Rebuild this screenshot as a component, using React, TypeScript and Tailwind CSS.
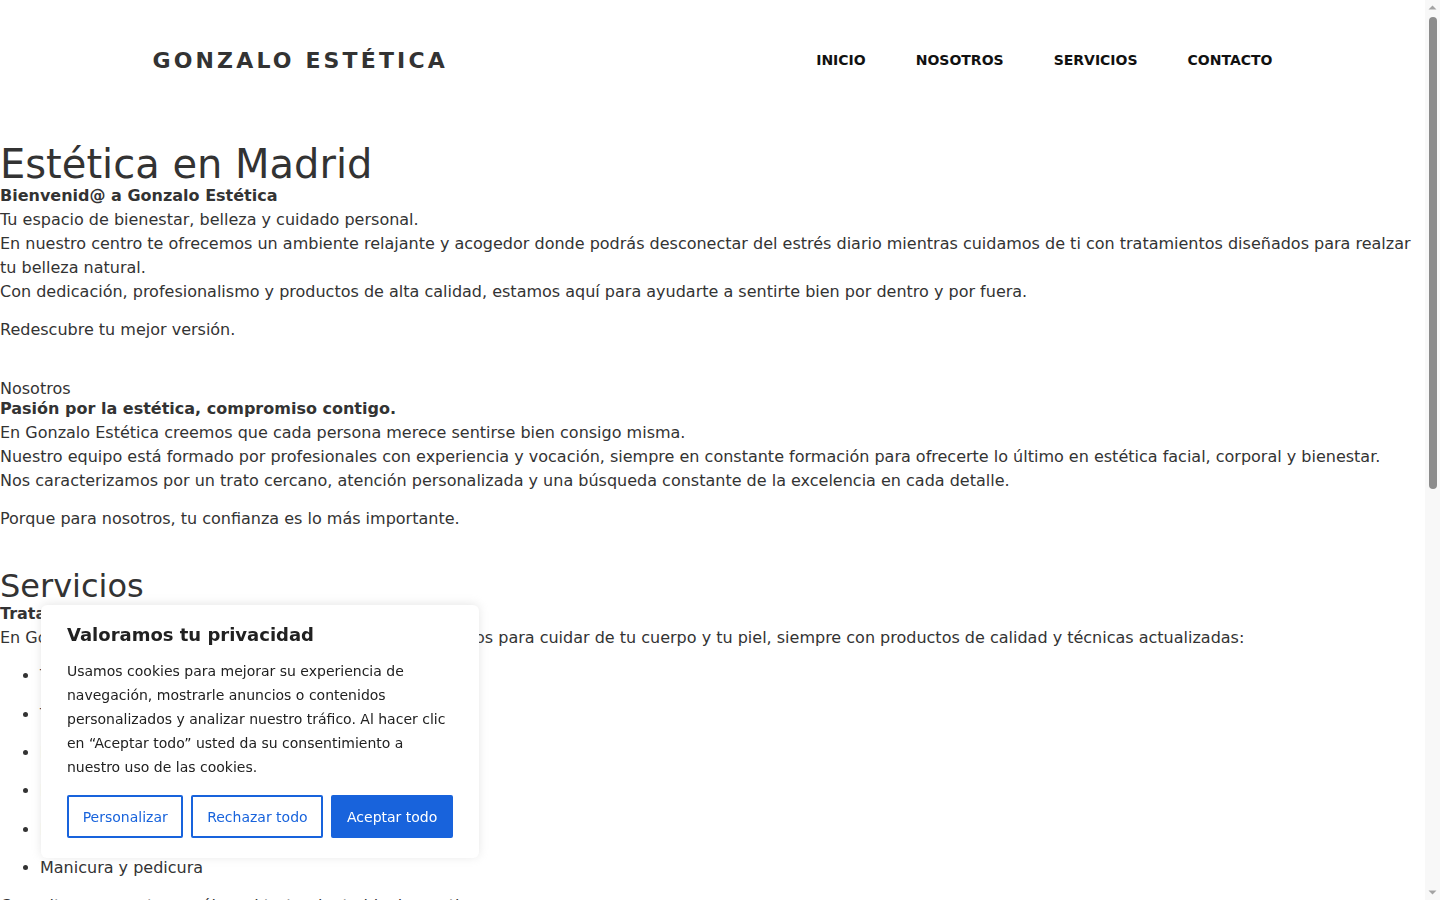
import React from "react";

const navItems = ["INICIO", "NOSOTROS", "SERVICIOS", "CONTACTO"];

const services = [
  "Tratamientos faciales",
  "Tratamientos corporales",
  "Depilación",
  "Masajes relajantes",
  "Micropigmentación",
  "Manicura y pedicura",
];

function Header() {
  return (
    <header className="h-[120px] flex items-center">
      <div className="w-full max-w-[1120px] mx-auto flex items-center justify-between">
        <a href="#" className="text-[22px] font-bold tracking-[3.15px] text-[#333] leading-none pt-px">
          GONZALO ESTÉTICA
        </a>
        <nav className="flex items-center gap-[50px]">
          {navItems.map((item) => (
            <a key={item} href="#" className="text-[14px] font-bold text-[#111] leading-none">
              {item}
            </a>
          ))}
        </nav>
      </div>
    </header>
  );
}

function CookieBanner() {
  return (
    <div className="fixed left-[41px] bottom-[42px] w-[438px] bg-white rounded-[6px] shadow-[0_-1px_10px_0_rgba(172,171,171,0.3)] pt-[18px] pb-[20px] px-[26px] z-50">
      <p className="text-[18px] font-bold leading-6 text-[#212121]">Valoramos tu privacidad</p>
      <p className="mt-3 text-[14px] leading-6 text-[#212121]">
        Usamos cookies para mejorar su experiencia de navegación, mostrarle anuncios o contenidos
        personalizados y analizar nuestro tráfico. Al hacer clic en “Aceptar todo” usted da su
        consentimiento a nuestro uso de las cookies.
      </p>
      <div className="mt-4 flex gap-2">
        <button className="flex-auto border-2 border-[#1863dc] rounded-[2px] py-[7.5px] text-[14px] leading-6 text-[#1863dc] bg-transparent">
          Personalizar
        </button>
        <button className="flex-auto border-2 border-[#1863dc] rounded-[2px] py-[7.5px] text-[14px] leading-6 text-[#1863dc] bg-transparent">
          Rechazar todo
        </button>
        <button className="flex-auto border-2 border-[#1863dc] rounded-[2px] py-[7.5px] text-[14px] leading-6 text-white bg-[#1863dc]">
          Aceptar todo
        </button>
      </div>
    </div>
  );
}

function ScrollTrack() {
  return (
    <div className="w-[15px] h-full bg-[#f8f8f8] flex flex-col items-center shrink-0">
      <svg width="15" height="15" viewBox="0 0 15 15" className="shrink-0">
        <path d="M3.5 9.5 L7.5 5.5 L11.5 9.5 Z" fill="#a3a3a3" />
      </svg>
      <div className="w-[8px] h-[472px] mt-[2px] rounded-full bg-[#8c8c8c]" />
      <div className="flex-1" />
      <svg width="15" height="15" viewBox="0 0 15 15" className="shrink-0">
        <path d="M3.5 5.5 L7.5 9.5 L11.5 5.5 Z" fill="#a3a3a3" />
      </svg>
    </div>
  );
}

export default function App() {
  return (
    <div className="font-['DejaVu_Sans',sans-serif] text-[#333] bg-white h-screen flex overflow-hidden">
      <div className="flex-1 min-w-0 h-full overflow-hidden">
        <Header />
        <main className="pt-6 pb-16 text-[16px] leading-6">
          {/* Inicio */}
          <section>
            <h1 className="text-[40px] leading-none font-normal">Estética en Madrid</h1>
            <p className="font-bold">Bienvenid@ a Gonzalo Estética</p>
            <p>Tu espacio de bienestar, belleza y cuidado personal.</p>
            <p>
              En nuestro centro te ofrecemos un ambiente relajante y acogedor donde podrás desconectar del
              estrés diario mientras cuidamos de ti con tratamientos diseñados para realzar tu belleza natural.
            </p>
            <p>
              Con dedicación, profesionalismo y productos de alta calidad, estamos aquí para ayudarte a sentirte
              bien por dentro y por fuera.
            </p>
            <p className="mt-[14px]">Redescubre tu mejor versión.</p>
          </section>

          {/* Nosotros */}
          <section className="mt-[39px]">
            <p className="leading-none">Nosotros</p>
            <p className="font-bold">Pasión por la estética, compromiso contigo.</p>
            <p>En Gonzalo Estética creemos que cada persona merece sentirse bien consigo misma.</p>
            <p>
              Nuestro equipo está formado por profesionales con experiencia y vocación, siempre en constante
              formación para ofrecerte lo último en estética facial, corporal y bienestar.
            </p>
            <p>
              Nos caracterizamos por un trato cercano, atención personalizada y una búsqueda constante de la
              excelencia en cada detalle.
            </p>
            <p className="mt-[14px]">Porque para nosotros, tu confianza es lo más importante.</p>
          </section>

          {/* Servicios */}
          <section className="mt-[39px]">
            <h2 className="text-[32px] leading-none font-normal">Servicios</h2>
            <p className="font-bold">Tratamientos a tu medida</p>
            <p>
              En Gonzalo Estética ofrecemos una amplia gama de servicios para cuidar de tu cuerpo y tu piel,
              siempre con productos de calidad y técnicas actualizadas:
            </p>
            <ul className="mt-[7px] list-disc pl-10">
              {services.map((s) => (
                <li key={s} className="py-[7.2px]">
                  {s}
                </li>
              ))}
            </ul>
            <p className="mt-[7px]">Consulta con nosotros cuál es el tratamiento ideal para ti.</p>
          </section>

          {/* Contacto */}
          <section className="mt-[40px]">
            <h2 className="text-[32px] leading-none font-normal">Contacto</h2>
            <p className="font-bold">Estamos para ayudarte</p>
            <p>Reserva tu cita o resuelve cualquier duda llamándonos o escribiéndonos.</p>
            <p>Teléfono: 910 000 000</p>
            <p>Email: info@gonzaloestetica.es</p>
            <p>Dirección: Calle Mayor, 1 · 28013 Madrid</p>
          </section>
        </main>
      </div>
      <ScrollTrack />
      <CookieBanner />
    </div>
  );
}
